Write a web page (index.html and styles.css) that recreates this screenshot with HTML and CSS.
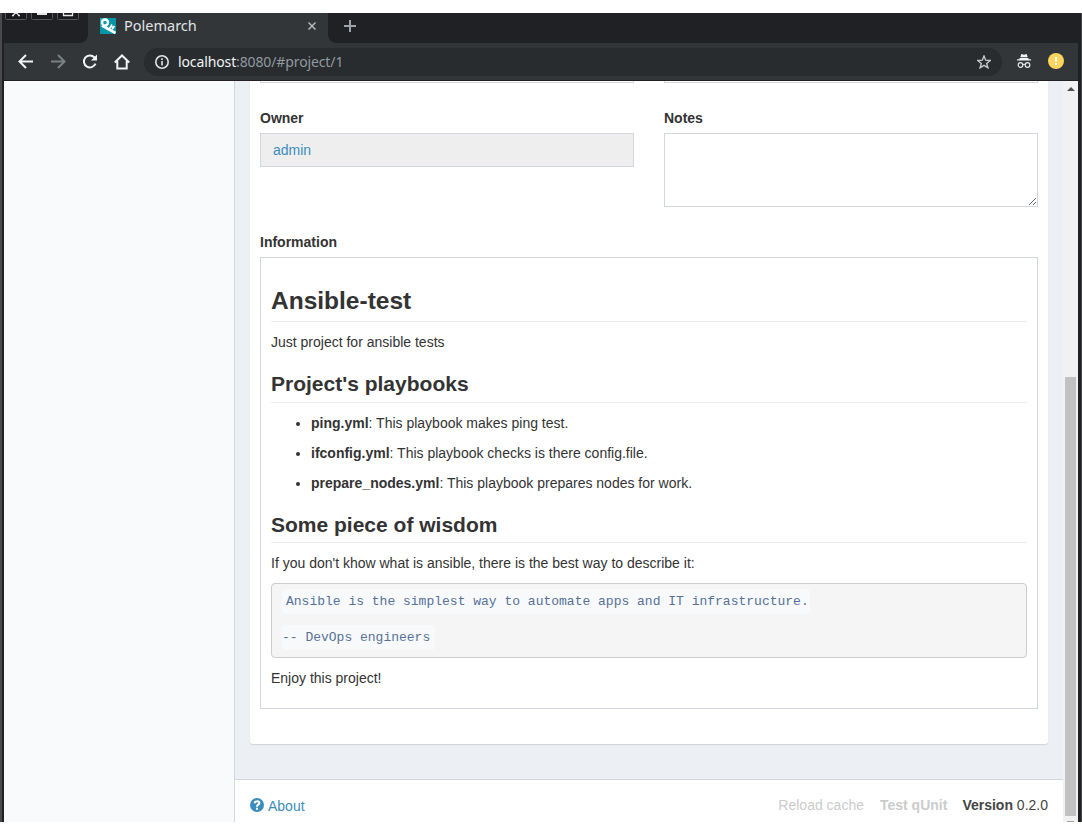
FILE: index.html
```
<!DOCTYPE html>
<html lang="en">
<head>
<meta charset="utf-8">
<title>Polemarch</title>
<link rel="stylesheet" href="styles.css">
</head>
<body>
<div class="window">
  <header class="tabs">
    <div class="controls">
      <svg class="control" viewBox="0 0 22 7"><path class="frame" d="M.5 0v5.500q0 1 1 1h19q1 0 1-1V0"/><path class="mark" d="M7 2.500h2M13 2.500h2M8.500 2l2.500-3 2.500 3"/></svg>
      <svg class="control" viewBox="0 0 22 7"><path class="frame" d="M.5 0v5.500q0 1 1 1h19q1 0 1-1V0"/><path class="fill" d="M6 0h10v2H6z"/></svg>
      <svg class="control" viewBox="0 0 22 7"><path class="frame" d="M.5 0v5.500q0 1 1 1h19q1 0 1-1V0"/><path class="mark" d="M6.500 0v2.500h9V0"/></svg>
    </div>
    <div class="tab">
      <svg class="favicon" viewBox="0 0 16 16"><path fill="#0596a8" d="M0 0h16v16H0z"/><path fill="#0fb1bf" d="M0 0h8L0 9z"/><circle cx="5" cy="4.500" r="3" fill="none" stroke="#fff" stroke-width="2.400"/><path fill="none" stroke="#fff" stroke-width="2.800" d="M2 7.500l13.500 7.500"/><path fill="none" stroke="#fff" stroke-width="1.500" d="M9.500 10.500l2.500-4M12 11.500l2.500-3.500M10.500 8l3.500 2"/></svg>
      <span class="tab-title">Polemarch</span>
      <svg class="tab-close" viewBox="0 0 8 8"><path d="M.5.5l7 7M7.500.5l-7 7"/></svg>
    </div>
    <svg class="new-tab" viewBox="0 0 12 12"><path d="M6 0v12M0 6h12"/></svg>
  </header>
  <nav class="toolbar">
    <svg class="nav-icon" viewBox="0 0 16 16"><path d="M15 7.500H2M8 1L1.500 7.500 8 14"/></svg>
    <svg class="nav-icon dim" viewBox="0 0 16 16"><path d="M1 7.500h13M8 1l6.500 6.500L8 14"/></svg>
    <svg class="nav-icon" viewBox="0 0 16 16"><path d="M13.500 9.700A6 6 0 1 1 12.300 3.300L14 5"/><path class="solid" d="M15 .5v6H9z"/></svg>
    <svg class="nav-icon" viewBox="0 0 16 16"><path d="M.8 8.500L8 1.500l7.200 7M3.300 7v7.500h9.400V7"/></svg>
    <div class="address">
      <svg class="info" viewBox="0 0 14 14"><circle cx="7" cy="7" r="6.200"/><path d="M7 6v4.500M7 3.300v1.600"/></svg>
      <span class="url"><b>localhost</b>:8080/#project/1</span>
      <svg class="star" viewBox="0 0 14 14"><path d="M7 1l1.700 4.200 4.500.3-3.500 2.900 1.200 4.400L7 10.400l-3.900 2.400 1.200-4.400L.8 5.500l4.500-.3z"/></svg>
    </div>
    <svg class="incognito" viewBox="0 0 14 14"><path class="solid" d="M4.300 0L7 .8 9.700 0l1 3.300H3.300zM2.500 4h9v1.300H14v1.200H0V5.300h2.500z"/><circle cx="3.500" cy="11" r="2.300"/><circle cx="10.500" cy="11" r="2.300"/><path d="M5.800 10.600q1.200-.7 2.400 0"/></svg>
    <svg class="alert" viewBox="0 0 16 16"><circle cx="8" cy="8" r="8"/><path d="M7 4h2v4.500H7zM7 10h2v2H7z"/></svg>
  </nav>
  <div class="viewport">
    <aside class="sidebar"></aside>
    <main class="main">
      <section class="content">
        <div class="card">
          <div class="columns"><div class="cut"></div><div class="cut"></div></div>
          <div class="columns fields">
            <div><label>Owner</label><div class="owner"><a>admin</a></div></div>
            <div><label>Notes</label><textarea class="notes"></textarea></div>
          </div>
          <label>Information</label>
          <article class="readme">
            <h1>Ansible-test</h1>
            <p>Just project for ansible tests</p>
            <h2>Project's playbooks</h2>
            <ul>
              <li><b>ping.yml</b>: This playbook makes ping test.</li>
              <li><b>ifconfig.yml</b>: This playbook checks is there config.file.</li>
              <li><b>prepare_nodes.yml</b>: This playbook prepares nodes for work.</li>
            </ul>
            <h2 class="wisdom">Some piece of wisdom</h2>
            <p>If you don't khow what is ansible, there is the best way to describe it:</p>
            <div class="quote"><code class="first">Ansible is the simplest way to automate apps and IT infrastructure.</code><code>-- DevOps engineers</code></div>
            <p>Enjoy this project!</p>
          </article>
        </div>
      </section>
      <footer class="footer">
        <a class="about"><svg viewBox="0 0 14 14"><circle cx="7" cy="7" r="7"/><path class="hook" d="M4.500 5.200Q5 3.200 7.100 3.200 9.400 3.300 9.400 5 9.400 6.200 8 6.900 7 7.400 7 8.700"/><path class="dot" d="M6 9.700h2v2H6z"/></svg>About</a>
        <div class="links"><span>Reload cache</span><b>Test qUnit</b><span class="version"><b>Version</b> 0.2.0</span></div>
      </footer>
    </main>
    <div class="scrollbar"><i class="up"></i><i class="thumb"></i><i class="down"></i></div>
  </div>
</div>
</body>
</html>
```
FILE: styles.css
```
* { box-sizing: border-box; }
body { margin: 0; padding: 13px 0; height: 835px; overflow: hidden; background: #fff; color: #333; font: 14px/20px "Liberation Sans", Arial, sans-serif; }
svg { display: block; flex: none; fill: none; }
.window { height: 809px; display: flex; flex-direction: column; background: #202125; border-left: 2px solid #4a4a4a; border-right: 1px solid #444548; padding: 0 3px 0 2px; }
.tabs { height: 30px; flex: none; display: flex; background: #202125; }
.controls { width: 84px; display: flex; gap: 4px; padding-left: 1px; }
.control { width: 22px; height: 7px; }
.frame { stroke: #55575a; fill: #191a1d; }
.mark { stroke: #e5e5e5; stroke-width: 1.3; }
.fill { fill: #e5e5e5; }
.tab { position: relative; width: 240px; display: flex; align-items: center; padding: 0 12px 4px; background: #323639; }
.tab::before, .tab::after { content: ""; position: absolute; bottom: 0; width: 8px; height: 8px; }
.tab::before { left: -8px; background: radial-gradient(circle at 0 0, transparent 7.5px, #323639 8px); }
.tab::after { right: -8px; background: radial-gradient(circle at 100% 0, transparent 7.5px, #323639 8px); }
.favicon { width: 16px; height: 16px; }
.tab-title { margin: -2px 0 0 8px; flex: 1; color: #e1e3e5; font: 14.5px/20px "Noto Sans", sans-serif; }
.tab-close { width: 8px; height: 8px; stroke: #b5b8bb; stroke-width: 1.5; }
.new-tab { width: 12px; height: 12px; margin: 7px 0 0 16px; stroke: #9fa2a6; stroke-width: 2; }
.toolbar { height: 38px; flex: none; display: flex; align-items: center; padding: 0 14px; gap: 16px; background: #323639; border-bottom: 1px solid #231f25; }
.nav-icon { width: 16px; height: 16px; stroke: #f1f3f4; stroke-width: 2; }
.dim { stroke: #7c8083; }
.solid { fill: #f1f3f4; stroke: none; }
.address { width: 858px; height: 28px; margin-left: -2px; border-radius: 14px; background: #282c2f; display: flex; align-items: center; padding: 0 11px; }
.info { width: 14px; height: 14px; stroke: #e2e4e6; stroke-width: 1.6; }
.url { margin-left: 9px; flex: 1; color: #92999f; font: 14px/20px "Noto Sans", sans-serif; letter-spacing: -.12px; }
.url b { font-weight: 400; color: #f1f3f4; }
.star { width: 14px; height: 14px; stroke: #c5c9cc; stroke-width: 1.4; }
.incognito { width: 14px; height: 14px; margin-left: -1px; margin-top: -1px; stroke: #e6e8ea; stroke-width: 1.2; }
.alert { width: 16px; height: 16px; margin: -2px 0 0 1px; fill: #ffd55f; }
.alert path { fill: #fff; }
.viewport { flex: 1; min-height: 0; display: flex; }
.sidebar { width: 231px; flex: none; background: #f9fafc; border-right: 1px solid #d2d6de; }
.main { width: 828px; flex: none; display: flex; flex-direction: column; background: #ecf0f5; }
.content { height: 698px; flex: none; padding: 0 15px; }
.card { height: 663px; padding: 0 10px; background: #fff; border-radius: 0 0 3px 3px; box-shadow: 0 1px 1px rgba(0,0,0,.12); }
.columns { display: grid; grid-template-columns: 374px 374px; gap: 30px; }
.cut { height: 2px; border: 1px solid #d2d6de; border-top: 0; }
.fields { height: 124px; margin-top: 25px; }
label { display: block; height: 20px; margin-bottom: 5px; font-weight: 700; }
.owner { height: 34px; padding: 6px 12px; border: 1px solid #d2d6de; background: #eee; }
a { color: #3c8dbc; }
.notes { display: block; width: 374px; height: 74px; border: 1px solid #d2d6de; resize: vertical; background: #fff; outline: 0; }
.readme { height: 452px; border: 1px solid #d2d6de; padding: 25px 10px 0; }
h1 { margin: 0; height: 39px; border-bottom: 1px solid #eaecef; font: 700 24.5px/35px "Liberation Sans", Arial, sans-serif; }
h2 { margin: 19px 0 0; height: 32px; border-bottom: 1px solid #eaecef; font: 700 21px/26px "Liberation Sans", Arial, sans-serif; }
p { margin: 10px 0 0; }
ul { margin: 10px 0 0; padding-left: 40px; }
li { height: 20px; margin-bottom: 10px; }
.wisdom { margin-top: 19px; height: 31px; }
.quote { height: 75px; margin-top: 10px; padding: 5px 10px; border: 1px solid #ccc; border-radius: 4px; background: #f5f5f5; display: flex; flex-direction: column; align-items: flex-start; gap: 11px; }
code { height: 25px; padding: 0 5px 0 0; border-radius: 4px; color: #587198; background: #f7f9fb; font: 13px/25px "Liberation Mono", monospace; white-space: pre; }
.first { padding: 0 1px 0 4px; }
.footer { flex: 1; border-top: 1px solid #d2d6de; background: #fff; padding: 15px 15px 0; display: flex; justify-content: space-between; }
.about { display: flex; gap: 4px; padding-top: 1px; }
.about svg { width: 14px; height: 14px; margin-top: 2px; fill: #3c8dbc; }
.about .hook { fill: none; stroke: #fff; stroke-width: 2; }
.about .dot { fill: #fff; }
.links { display: flex; gap: 16px; color: #ccc; }
.version { margin-left: -1px; color: #444; }
.scrollbar { width: 15px; flex: none; background: #f1f1f1; display: flex; flex-direction: column; align-items: center; }
.up { margin-top: 6px; border: 4px solid transparent; border-top: 0; border-bottom: 4px solid #505050; }
.thumb { width: 11px; height: 439px; margin-top: 286px; background: #c1c1c1; }
.down { width: 7px; height: 1px; margin-top: 5px; background: #a3a3a3; }
```
